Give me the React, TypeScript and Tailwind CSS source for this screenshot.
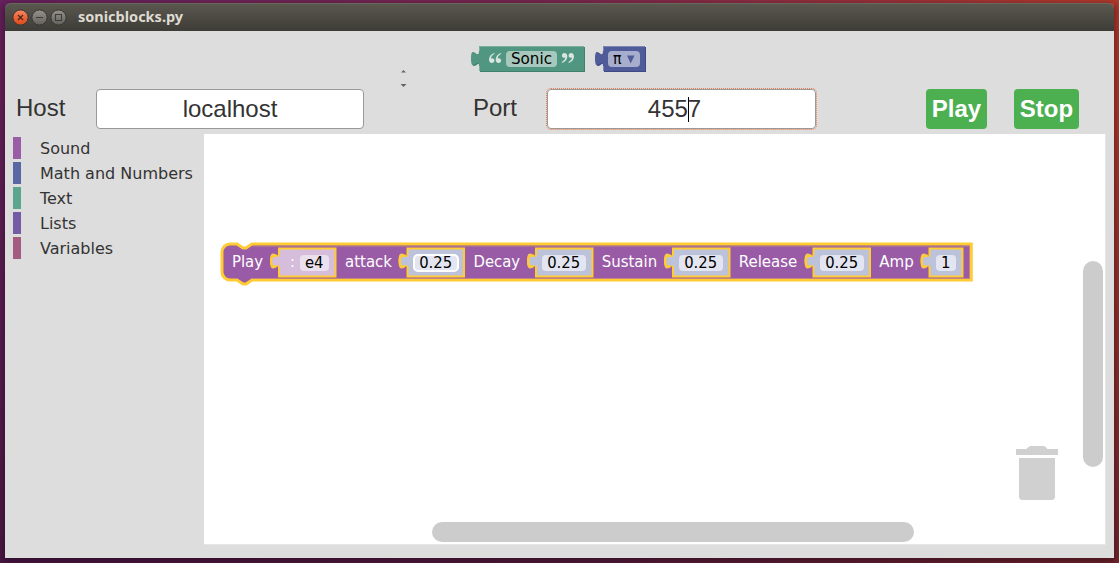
import React from "react";

const MENU = [
  { label: "Sound", color: "bg-[#9a5ca6]" },
  { label: "Math and Numbers", color: "bg-[#5b67a5]" },
  { label: "Text", color: "bg-[#5ba58c]" },
  { label: "Lists", color: "bg-[#745ba5]" },
  { label: "Variables", color: "bg-[#a55b80]" },
];

/* x is the left edge of the value block, in workspace coordinates */
const PARAMS = [
  { name: "Play", nameX: 28, nameW: 31, x: 75, w: 56.5, value: "e4", fieldX: 96, fieldW: 29, note: true, editing: false },
  { name: "attack", nameX: 141, nameW: 47, x: 203.5, w: 56.5, value: "0.25", fieldX: 210, fieldW: 44, note: false, editing: true },
  { name: "Decay", nameX: 269.5, nameW: 46.5, x: 332, w: 56.5, value: "0.25", fieldX: 338, fieldW: 44, note: false, editing: false },
  { name: "Sustain", nameX: 397.7, nameW: 55.5, x: 469, w: 56.5, value: "0.25", fieldX: 475, fieldW: 44, note: false, editing: false },
  { name: "Release", nameX: 534.8, nameW: 58.5, x: 609.5, w: 56.5, value: "0.25", fieldX: 616, fieldW: 44, note: false, editing: false },
  { name: "Amp", nameX: 675.3, nameW: 34.5, x: 725.5, w: 33, value: "1", fieldX: 732, fieldW: 20, note: false, editing: false },
];

const plug = (x: number, y: number, w: number, h: number) =>
  `M${x},${y} h${w} v${h} h${-w} V${y + 20} c0,-10 -8,8 -8,-7.5 s8,2.5 8,-7.5 z`;

function WindowButton({ kind }: { kind: "close" | "min" | "max" }) {
  const close = kind === "close";
  return (
    <svg width="17" height="17" viewBox="0 0 17 17">
      <defs>
        <linearGradient id={`g-${kind}`} x1="0" y1="0" x2="0" y2="1">
          <stop offset="0" stopColor={close ? "#f58a66" : "#94928b"} />
          <stop offset="0.5" stopColor={close ? "#ed6439" : "#7c7a74"} />
          <stop offset="1" stopColor={close ? "#dc4b1b" : "#62605a"} />
        </linearGradient>
      </defs>
      <circle cx="8.5" cy="8.5" r="7.6" fill={`url(#g-${kind})`} stroke="#34332e" strokeWidth="0.9" />
      {close && <path d="M6 6l5 5M11 6l-5 5" stroke="#49281c" strokeWidth="1.3" />}
      {kind === "min" && <path d="M5 8.5h7" stroke="#3d3c37" strokeWidth="1.1" />}
      {kind === "max" && <path d="M5.5 5.5h6v6h-6z" fill="none" stroke="#3d3c37" strokeWidth="1.1" />}
    </svg>
  );
}

function PlayBlock() {
  const outline =
    "M18,118 a8,8 0 0 1 8,-8 H33 l6,4 3,0 6,-4 H767.3 V146 H48 l-6,4 -3,0 -6,-4 H26 a8,8 0 0 1 -8,-8 z";
  return (
    <svg width="901" height="410" className="absolute top-0 left-0 font-['DejaVu_Sans_Condensed','DejaVu_Sans',sans-serif] text-[16px]">
      <path d={outline} fill="#995ba5" stroke="#fc3" strokeWidth="3" />
      <path d="M49,112 H765.5 V144.5 H49" fill="none" stroke="#c3867c" strokeWidth="1" />
      {PARAMS.map((p) => (
        <g key={p.name}>
          <text x={p.nameX} y="133" fill="#fff" textLength={p.nameW} lengthAdjust="spacingAndGlyphs">
            {p.name}
          </text>
          <path
            d={plug(p.x, 114.5, p.w, 28)}
            fill={p.note ? "#d6bddb" : "#bdc2db"}
            stroke="#fc3"
            strokeWidth="2"
          />
          <path
            d={`M${p.x},134.5 c0,-10 -8,8 -8,-7.5 s8,2.5 8,-7.5`}
            fill={p.note ? "#d6bddb" : "#bdc2db"}
          />
          <path
            d={`M${p.x - 1.5},121.5 c-2,1.2 -6.200,-2 -6.200,5.500 s3.500,5.500 5,5`}
            fill="none"
            stroke="#fc3"
            strokeWidth="2.2"
          />
          {p.note && <text x="86" y="133" fill="#fff">:</text>}
          <rect
            x={p.fieldX}
            y="121"
            width={p.fieldW}
            height="16"
            rx="4"
            fill={p.note ? "#ebe0ed" : "#e3e5f0"}
            stroke={p.editing ? "#fff" : "none"}
            strokeWidth="2"
          />
          <text
            x={p.fieldX + p.fieldW / 2 - 0.3}
            y="134"
            textAnchor="middle"
            fill="#000"
            textLength={p.value === "0.25" ? 33 : p.note ? 18.5 : 9.5}
            lengthAdjust="spacingAndGlyphs"
          >
            {p.value}
          </text>
        </g>
      ))}
    </svg>
  );
}

const QUOTE =
  "M5.500 0C2 1.200 0 3.500 0 6.500 0 8.700 1.100 10 2.800 10S5.400 9 5.400 7.500 4.400 5.200 2.900 5.200c-.4 0-.8.1-1 .2C2.200 3.500 3.500 2 5.500 1zM12.200 0C8.700 1.200 6.700 3.500 6.700 6.500c0 2.200 1.100 3.500 2.800 3.500s2.600-1 2.600-2.500-1-2.300-2.500-2.300c-.4 0-.8.1-1 .2.3-1.900 1.600-3.400 3.600-4.400z";

function HeaderBlocks() {
  return (
    <div className="flex gap-[9px] pt-[15px] pl-[466px]">
      <svg width="115" height="27" className="font-['DejaVu_Sans_Condensed','DejaVu_Sans',sans-serif] text-[16px]">
        <path d={plug(9, 1, 105, 25)} fill="#418169" />
        <path d={plug(8, 0, 105, 25)} fill="#509680" />
        <path d="M8.5,25 V20 M8.5,5 V0.5 H113" fill="none" stroke="#7bb09f" strokeWidth="1" />
        <rect x="35" y="5" width="51" height="16" rx="4" fill="#a7c8bc" />
        <text x="40" y="18" fill="#000" textLength="41" lengthAdjust="spacingAndGlyphs">Sonic</text>
        <path d={QUOTE} transform="translate(18 7)" fill="#d9e5df" />
        <path d={QUOTE} transform="rotate(180 51.500 8.500)" fill="#d9e5df" />
      </svg>
      <svg width="52" height="27" className="font-['DejaVu_Sans_Condensed','DejaVu_Sans',sans-serif] text-[16px]">
        <path d={plug(9, 1, 42, 25)} fill="#3e4a83" />
        <path d={plug(8, 0, 42, 25)} fill="#505c9a" />
        <path d="M8.5,25 V20 M8.5,5 V0.5 H50" fill="none" stroke="#7b84b3" strokeWidth="1" />
        <rect x="13" y="5" width="32" height="16" rx="4" fill="#a7adcc" />
        <text x="18" y="18" fill="#000" textLength="8.500" lengthAdjust="spacingAndGlyphs">π</text>
        <path d="M32 9.500h7.500l-3.750 8z" fill="#505c9a" />
      </svg>
    </div>
  );
}

export default function App() {
  return (
    <div className="h-[563px] w-[1119px] overflow-hidden bg-[linear-gradient(90deg,#69225f,#7c2950_50%,#b73c2b)]">
      <div className="h-full bg-[linear-gradient(180deg,transparent_3px,transparent_100px,#2a0c2c70)] px-[5px] pt-[3px]">
        <div className="relative h-[555px] w-[1109px] shadow-[0_3px_8px_2px_rgba(25,5,20,0.5)]">
          <div className="flex h-7 items-center rounded-t-[6px] bg-[linear-gradient(180deg,#5b584f,#3d3c37)] pl-[7px] shadow-[inset_0_1px_0_#6a675f]">
            <div className="flex gap-[2px]">
              <WindowButton kind="close" />
              <WindowButton kind="min" />
              <WindowButton kind="max" />
            </div>
            <div className="ml-[11px] font-['Noto_Sans',sans-serif] text-[14.5px] font-bold text-[#dfdbd2]">
              sonicblocks.py
            </div>
          </div>

          <div className="h-[527px] bg-[#ddd] text-[#333]">
            <div className="relative h-[103px]">
              <HeaderBlocks />
              <svg width="7" height="20" className="absolute top-[38px] left-[395px]">
                <path d="M1 3.500L3.500 1l2.500 2.500zM.5 15h6l-3 3z" fill="#666" />
              </svg>
              <div className="mt-4 flex h-10 items-center font-['Liberation_Sans',sans-serif] text-[24px]">
                <div className="w-[91px] pb-[2px] pl-[11px] leading-none">Host</div>
                <div className="flex h-10 w-[268px] items-center justify-center rounded border border-[#999] bg-white">
                  localhost
                </div>
                <div className="ml-[104px] w-[79px] pb-[2px] pl-[5px] leading-none">Port</div>
                <div className="flex h-10 w-[269px] items-center justify-center rounded border border-[#999] bg-white pr-[14px] outline-1 outline-dotted outline-[#ee8050]">
                  <span>455</span>
                  <span className="-mr-px h-[25px] w-px bg-black" />
                  <span>7</span>
                </div>
                <button className="ml-[110px] h-10 w-[61px] rounded bg-[#4caf50] font-bold text-white">Play</button>
                <button className="ml-[27px] h-10 w-[65px] rounded bg-[#4caf50] font-bold text-white">Stop</button>
              </div>
            </div>

            <div className="flex h-[411px]">
              <nav className="flex w-[199px] flex-col gap-[3px] pt-[3px] pl-2 font-['DejaVu_Sans',sans-serif] text-[16px]">
                {MENU.map((m) => (
                  <div key={m.label} className="flex h-[22px] items-center whitespace-nowrap">
                    <span className={`h-[22px] w-2 ${m.color}`} />
                    <span className="pt-[2px] pl-[19px] leading-[22px]">{m.label}</span>
                  </div>
                ))}
              </nav>
              <main className="relative w-[902px] border-r border-b border-[#e6e6e6] bg-white">
                <PlayBlock />
                <svg width="42" height="55" className="absolute top-[312px] left-[812px]">
                  <path
                    d="M0 3H10.500C12 1.500 12.500 0 15 0h12c2.500 0 3 1.500 4.500 3H42v6H0zM3 12h36v38.500a3.500 3.500 0 0 1-3.500 3.500h-29A3.500 3.500 0 0 1 3 50.500z"
                    fill="#d0d0d0"
                  />
                </svg>
                <div className="absolute top-[127px] left-[879px] h-[206px] w-5 rounded-full bg-[#ccc]" />
                <div className="absolute top-[388px] left-[228px] h-5 w-[482px] rounded-full bg-[#ccc]" />
              </main>
            </div>
          </div>
        </div>
      </div>
    </div>
  );
}
